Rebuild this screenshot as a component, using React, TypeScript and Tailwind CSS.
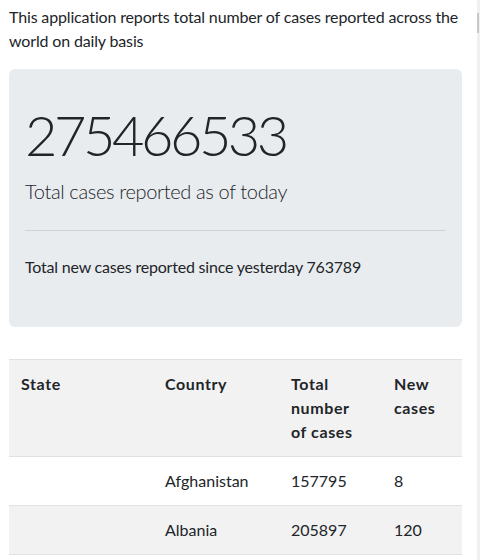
const rows = [
  { state: '', country: 'Afghanistan', total: 157795, fresh: 8 },
  { state: '', country: 'Albania', total: 205897, fresh: 120 },
]

export default function App() {
  return (
    <div
      className="flex h-[560px] overflow-hidden bg-white text-[#212529]"
      style={{ fontFamily: 'Lato, "Open Sans", sans-serif' }}
    >
      <main className="min-w-0 flex-1 pl-[9px] pr-[15px] pt-[5px]">
        <p className="-mr-[4px] mb-4 text-[16px] leading-6 tracking-[-0.15px]">
          This application reports total number of cases reported across the world on daily basis
        </p>

        <div className="mb-8 rounded-md bg-[#e9ecef] px-4 py-8">
          <h1 className="text-[56px] font-light leading-[1.2] tracking-[-3.5px]">275466533</h1>
          <p className="mt-2 text-[20px] font-light leading-[1.5] tracking-[-0.35px]">
            Total cases reported as of today
          </p>
          <hr className="my-6 border-t border-[#cfd3d7]" />
          <p className="mb-4 text-[16px] leading-6 tracking-[-0.2px]">
            Total new cases reported since yesterday 763789
          </p>
        </div>

        <table className="w-full table-fixed border-collapse border-b border-[#dee2e6] text-left text-[16px] leading-6">
          <thead>
            <tr className="bg-[#f2f2f2] tracking-[0.6px]">
              <th className="w-[144px] border-t border-[#dee2e6] p-3 align-top font-bold">State</th>
              <th className="w-[126px] border-t border-[#dee2e6] p-3 align-top font-bold">Country</th>
              <th className="w-[103px] border-t border-[#dee2e6] py-3 pl-3 pr-5 align-top font-bold">
                Total number of cases
              </th>
              <th className="border-t border-[#dee2e6] p-3 align-top font-bold">New cases</th>
            </tr>
          </thead>
          <tbody>
            {rows.map((r, i) => (
              <tr key={r.country} className={i % 2 === 1 ? 'bg-[#f2f2f2]' : 'bg-white'}>
                <td className="border-t border-[#dee2e6] p-3">{r.state}</td>
                <td className="border-t border-[#dee2e6] p-3">{r.country}</td>
                <td className="border-t border-[#dee2e6] p-3">{r.total}</td>
                <td className="border-t border-[#dee2e6] p-3">{r.fresh}</td>
              </tr>
            ))}
          </tbody>
        </table>
      </main>
      <aside className="w-[3px] shrink-0 bg-[#f0f0f0] pt-[13px]">
        <div className="h-[20px] w-[2px] bg-[#c8c8c8]" />
      </aside>
    </div>
  )
}
